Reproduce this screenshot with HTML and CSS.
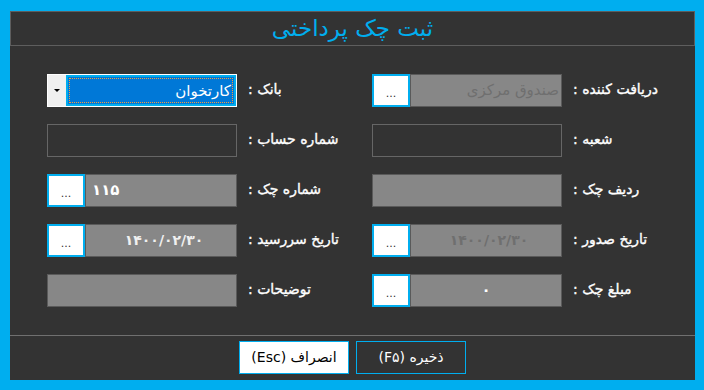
FILE: index.html
```html
<!DOCTYPE html>
<html lang="fa" dir="rtl">
<head>
    <meta charset="UTF-8">
    <title>ثبت چک پرداختی</title>
    <link rel="stylesheet" href="styles.css">
</head>
<body>
    <div class="chk-frame">
        <!-- Title -->
        <div class="chk-title">ثبت چک پرداختی</div>

        <!-- Form fields -->
        <div class="chk-form">
            <!-- Row 1 -->
            <div class="chk-label">دریافت کننده :</div>
            <div class="chk-group">
                <div class="chk-field chk-filled chk-dim">صندوق مرکزی</div>
                <div class="chk-btn">...</div>
            </div>
            <div class="chk-label">بانک :</div>
            <div class="chk-combo">
                <div class="chk-combo-value"><span>کارتخوان</span></div>
                <div class="chk-combo-arrow"></div>
            </div>

            <!-- Row 2 -->
            <div class="chk-label">شعبه :</div>
            <div class="chk-field"></div>
            <div class="chk-label">شماره حساب :</div>
            <div class="chk-field"></div>

            <!-- Row 3 -->
            <div class="chk-label">ردیف چک :</div>
            <div class="chk-field chk-filled"></div>
            <div class="chk-label">شماره چک :</div>
            <div class="chk-group">
                <div class="chk-field chk-filled chk-num">۱۱۵</div>
                <div class="chk-btn">...</div>
            </div>

            <!-- Row 4 -->
            <div class="chk-label">تاریخ صدور :</div>
            <div class="chk-group">
                <div class="chk-field chk-filled chk-date chk-dim">۱۴۰۰/۰۲/۳۰</div>
                <div class="chk-btn">...</div>
            </div>
            <div class="chk-label">تاریخ سررسید :</div>
            <div class="chk-group">
                <div class="chk-field chk-filled chk-date">۱۴۰۰/۰۲/۳۰</div>
                <div class="chk-btn">...</div>
            </div>

            <!-- Row 5 -->
            <div class="chk-label">مبلغ چک :</div>
            <div class="chk-group">
                <div class="chk-field chk-filled chk-amount">۰</div>
                <div class="chk-btn">...</div>
            </div>
            <div class="chk-label">توضیحات :</div>
            <div class="chk-field chk-filled"></div>
        </div>

        <!-- Footer buttons -->
        <div class="chk-footer">
            <div class="chk-action chk-save">ذخیره (F۵)</div>
            <div class="chk-action chk-cancel">انصراف (Esc)</div>
        </div>
    </div>
</body>
</html>
```

FILE: styles.css
```css
* {
    box-sizing: border-box;
}

body {
    margin: 0;
    width: 704px;
    height: 390px;
    padding: 11px 9px 10px 10px;
    background: #00aeef;
    font-family: "DejaVu Sans", Tahoma, sans-serif;
    overflow: hidden;
}

.chk-frame {
    height: 369px;
    background: #333333;
    display: flex;
    flex-direction: column;
}

.chk-title {
    height: 35px;
    border: 1px solid #5e5e5e;
    color: #00aeef;
    font-size: 23px;
    text-align: center;
    line-height: 33px;
}

.chk-form {
    height: 289px;
    padding: 28px 9px 0 37px;
    display: grid;
    grid-template-columns: 113px 190px 113px 190px;
    grid-auto-rows: 33px;
    column-gap: 11px;
    row-gap: 17px;
}

.chk-label {
    color: #ffffff;
    font-size: 14px;
    -webkit-text-stroke: 0.35px #ffffff;
    text-align: left;
    line-height: 31px;
    white-space: nowrap;
}

.chk-group {
    display: flex;
}

.chk-field {
    flex: 1;
    border: 1px solid #666666;
    color: #ffffff;
    font-size: 15px;
    line-height: 31px;
    padding: 0 2px;
    white-space: nowrap;
}

.chk-filled {
    background: #878787;
    border-color: #5a5a5a;
}

.chk-dim {
    color: #6f6f6f;
}

.chk-num {
    text-align: left;
    font-weight: bold;
    letter-spacing: 4px;
    padding-left: 6px;
}

.chk-date {
    text-align: center;
    letter-spacing: 6px;
    font-size: 14px;
    font-weight: bold;
    padding-left: 8px;
}

.chk-date:not(.chk-dim) {
    color: #f0f0f0;
}

.chk-amount {
    text-align: center;
    font-weight: bold;
}

.chk-btn {
    width: 38px;
    flex: none;
    background: #ffffff;
    border: 2px solid #00aeef;
    color: #333333;
    font-size: 11px;
    text-align: center;
    line-height: 30px;
    padding-top: 3px;
}

.chk-combo {
    display: flex;
    border: 1px solid #ffffff;
}

.chk-combo-value {
    flex: 1;
    background: #0078d7;
    border: 2px solid #00aeef;
    padding: 1px;
}

.chk-combo-value span {
    display: block;
    height: 100%;
    border: 1px dotted #f0a040;
    color: #ffffff;
    font-size: 15px;
    line-height: 25px;
    padding-right: 1px;
}

.chk-combo-arrow {
    width: 18px;
    background: #f0f0f0;
    position: relative;
}

.chk-combo-arrow::after {
    content: "";
    position: absolute;
    left: 6px;
    top: 14px;
    border-left: 3px solid transparent;
    border-right: 3px solid transparent;
    border-top: 3px solid #000000;
}

.chk-footer {
    flex: 1;
    border-top: 1px solid #707070;
    display: flex;
    justify-content: center;
    gap: 7px;
    padding-top: 5px;
}

.chk-action {
    width: 110px;
    height: 33px;
    border: 1px solid #00aeef;
    font-size: 14px;
    text-align: center;
    line-height: 31px;
}

.chk-save {
    color: #ffffff;
    background: #333333;
}

.chk-cancel {
    color: #000000;
    background: #ffffff;
}
```
